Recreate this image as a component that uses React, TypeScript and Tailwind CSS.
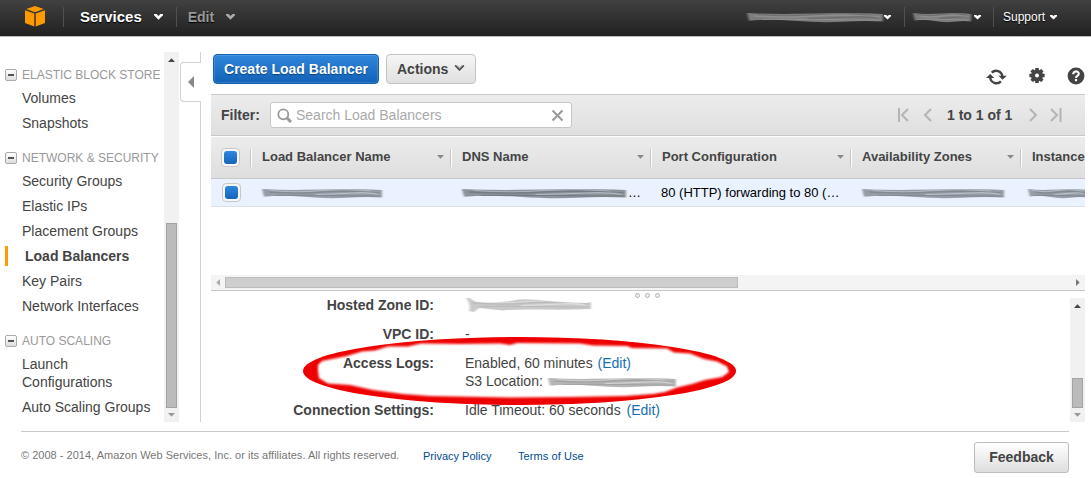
import React from "react";

type Entry = { label: string; active?: boolean };
type Section = { title: string; items: Entry[] };

const sections: Section[] = [
  { title: "ELASTIC BLOCK STORE", items: [{ label: "Volumes" }, { label: "Snapshots" }] },
  {
    title: "NETWORK & SECURITY",
    items: [
      { label: "Security Groups" },
      { label: "Elastic IPs" },
      { label: "Placement Groups" },
      { label: "Load Balancers", active: true },
      { label: "Key Pairs" },
      { label: "Network Interfaces" },
    ],
  },
  { title: "AUTO SCALING", items: [{ label: "Launch Configurations" }, { label: "Auto Scaling Groups" }] },
];

function Chevron({ className, color }: { className?: string; color: string }) {
  return (
    <svg className={className} width="9" height="6" viewBox="0 0 9 6" fill={color}>
      <path d="M0 0h2.6L4.5 1.9 6.4 0H9v1.3L4.5 5.8 0 1.3z" />
    </svg>
  );
}

function Caret() {
  return (
    <svg width="7" height="5" viewBox="0 0 7 5" fill="#fff">
      <path d="M0 0h2.2l1.3.9L4.800 0H7v1.300L3.500 4.600 0 1.300z" />
    </svg>
  );
}

function Tri({ dir, color }: { dir: "up" | "down" | "left" | "right"; color: string }) {
  const d = {
    up: "M0 4L3.500 0.300 7 4z",
    down: "M0 0L3.500 3.700 7 0z",
    left: "M4 0L0.300 3.500 4 7z",
    right: "M0 0L3.700 3.500 0 7z",
  }[dir];
  const flat = dir === "up" || dir === "down";
  return (
    <svg width={flat ? 7 : 4} height={flat ? 4 : 7} fill={color}>
      <path d={d} />
    </svg>
  );
}

function Smudge({
  id,
  w,
  h = 12,
  color,
  streak,
  tail,
}: {
  id: string;
  w: number;
  h?: number;
  color: string;
  streak: string;
  tail?: boolean;
}) {
  return (
    <svg className="block shrink-0 overflow-visible" width={w} height={h} viewBox={`0 0 ${w} ${h}`}>
      <defs>
        <filter id={id} x="-5%" y="-50%" width="110%" height="200%">
          <feGaussianBlur stdDeviation="0.9 0.6" />
        </filter>
      </defs>
      <g filter={`url(#${id})`} fill="none">
        <path
          d={
            tail
              ? `M1 0L5 0Q8 5 ${w * 0.2} 4.5T${w * 0.4} 2T${w * 0.7} 3.500T${w} 4V11Q${w * 0.8} 12 ${w * 0.6} 11.500T${w * 0.3} 12.500L14 10 9 14 4 13Q6 6 1 0z`
              : `M1 2Q${w * 0.2} 3.200 ${w * 0.35} 2.800T${w * 0.65} 2T${w - 1} 3V10.500Q${w * 0.85} 9.500 ${w * 0.7} 10.800T${w * 0.35} 9.800T3 9.800z`
          }
          fill={color}
          fillOpacity="0.68"
        />
        <path d={`M8 5Q${w * 0.3} 7 ${w * 0.5} 5T${w - 4} 6`} stroke={color} strokeWidth="1.600" strokeOpacity="0.5" />
        <path d={`M${w * 0.12} 8.500Q${w * 0.4} 8 ${w * 0.6} 8.500T${w - 3} 9`} stroke={color} strokeWidth="1.200" strokeOpacity="0.6" />
        <path d={`M${w * 0.45} 7.500Q${w * 0.6} 7 ${w * 0.75} 6T${w - 5} 7.500`} stroke={streak} strokeWidth="1.200" strokeOpacity="0.45" />
        <path d={`M${w * 0.08} 3.500Q${w * 0.3} 6 ${w * 0.5} 3.500T${w * 0.9} 4`} stroke={streak} strokeWidth="1" strokeOpacity="0.35" />
      </g>
    </svg>
  );
}

function CheckBox() {
  return (
    <span className="flex size-[19px] shrink-0 items-center justify-center rounded-[4px] border border-[#c8c8c8] bg-[#f6f6f6]">
      <span className="size-[13px] rounded-[3px] bg-linear-to-b from-[#2f86dc] to-[#1565b8]" />
    </span>
  );
}

function Sidebar() {
  return (
    <nav className="flex h-[370px] w-[179px] shrink-0">
      <div className="w-[164px] pt-[14px]">
        {sections.map((s) => (
          <div key={s.title} className="mb-[17px]">
            <div className="mb-[5px] flex h-[18px] items-center pl-[5px]">
              <span className="flex size-3 items-center justify-center rounded-[2px] border border-[#aaa] bg-linear-to-b from-white to-[#ddd]">
                <span className="h-[2px] w-[6px] bg-[#555]" />
              </span>
              <span className="pl-[5px] text-[12px] whitespace-nowrap text-[#999]">{s.title}</span>
            </div>
            <ul className="flex flex-col gap-[7px]">
              {s.items.map((it) =>
                it.active ? (
                  <li key={it.label} className="flex h-[18px] items-center pl-[5px] font-bold">
                    <span className="h-5 w-[3px] shrink-0 bg-[#ff9900]" />
                    <span className="pl-[17px]">{it.label}</span>
                  </li>
                ) : (
                  <li key={it.label} className="pr-[8px] pl-[22px]">
                    {it.label}
                  </li>
                ),
              )}
            </ul>
          </div>
        ))}
      </div>
      <div className="flex w-[15px] flex-col items-center bg-[#f1f1f1]">
        <div className="flex h-[15px] items-center">
          <Tri dir="up" color="#444" />
        </div>
        <div className="mt-[156px] h-[185px] w-[11px] border border-[#a3a3a3] bg-[#bbb]" />
        <div className="flex h-[14px] items-center">
          <Tri dir="down" color="#999" />
        </div>
      </div>
    </nav>
  );
}

function Collapse() {
  return (
    <div className="flex w-[32px] shrink-0 flex-col pl-px">
      <div className="h-[10px] w-[21px] border-r border-[#d2d2d2]" />
      <div className="flex h-[40px] w-[21px] items-center rounded-l-[4px] border border-r-0 border-[#d2d2d2] pl-[7px]">
        <svg width="6" height="12" fill="#888">
          <path d="M6 0v12L0 6z" />
        </svg>
      </div>
      <div className="w-[21px] flex-1 border-r border-[#d2d2d2]" />
    </div>
  );
}

function Toolbar() {
  return (
    <div className="flex h-[42px] w-[874px] pt-[2px] pl-[2px]">
      <button className="h-[30px] w-[166px] rounded-[4px] border border-[#1161b4] bg-linear-to-b from-[#2f86dc] to-[#1262b6] font-bold text-white shadow-[inset_0_0_0_1px_rgba(255,255,255,0.14)] [text-shadow:0_1px_1px_#0a4482]">
        Create Load Balancer
      </button>
      <button className="ml-[7px] flex h-[30px] w-[90px] items-center rounded-[4px] border border-[#c3c3c3] bg-linear-to-b from-[#f6f6f6] to-[#e0e0e0] pl-[10px] font-bold">
        Actions
        <svg className="mb-[2px] ml-[6px]" width="11" height="8" viewBox="0 0 11 8">
          <path d="M1 1.200h2.300L5.500 3.400 7.700 1.200H10L5.500 6.500z" fill="#999" />
          <path d="M1 1.500L5.500 6.200 10 1.500" fill="none" stroke="#444" strokeWidth="1.200" />
        </svg>
      </button>
      <div className="mt-[13px] ml-auto flex items-start text-[#444]">
        <svg className="mt-[2px]" width="21" height="17" viewBox="0 0 21 17" fill="none" stroke="#444" strokeWidth="2.400">
          <path d="M5.700 3.600A6.300 6.300 0 0 1 16.400 7.500M14.900 12.400A6.300 6.300 0 0 1 4.200 8.500" />
          <path d="M12.400 6.800h8.400L16.600 10.800zM0 9h8.400L4.200 5z" fill="#444" stroke="none" />
        </svg>
        <svg className="ml-[22px]" width="16" height="17" viewBox="-8 -8.500 16 17">
          <g fill="#444">
            <circle r="6" />
            {[0, 45, 90, 135].map((a) => (
              <rect key={a} x="-1.800" y="-7.600" width="3.600" height="15.200" rx="0.500" transform={`rotate(${a})`} />
            ))}
          </g>
          <circle r="2" fill="#fff" />
        </svg>
        <svg className="ml-[22px]" width="18" height="18" viewBox="0 0 18 18">
          <circle cx="9" cy="9" r="8.400" fill="#444" />
          <path d="M6.200 7.300C6.200 3.500 11.800 3.600 11.800 6.800c0 2.200-2.800 2-2.800 4.100" fill="none" stroke="#fff" strokeWidth="2.100" />
          <rect x="7.900" y="12" width="2.200" height="2.200" fill="#fff" />
        </svg>
      </div>
    </div>
  );
}

function FilterBar() {
  return (
    <div className="flex h-[42px] items-center border-y border-[#c8c8c8] bg-linear-to-b from-[#ececec] to-[#dfdfdf] pl-[10px]">
      <span className="w-[49px] font-bold">Filter:</span>
      <div className="flex h-[26px] w-[302px] items-center rounded-[3px] border border-[#c6c6c6] bg-white pl-[6px]">
        <svg width="15" height="15" viewBox="0 0 15 15" fill="none" stroke="#999">
          <circle cx="6.300" cy="6.300" r="5" strokeWidth="1.800" />
          <path d="M9.800 9.800L14 14" strokeWidth="3" />
        </svg>
        <span className="pl-[4px] text-[#a9a9a9]">Search Load Balancers</span>
        <svg className="mr-[7px] ml-auto" width="13" height="13" viewBox="0 0 13 13" stroke="#999" strokeWidth="2">
          <path d="M1.500 1.500l10 10M11.500 1.500l-10 10" />
        </svg>
      </div>
      <div className="ml-auto flex items-center pr-[23px]">
        <svg width="11" height="14" fill="none" stroke="#b4b4b4" strokeWidth="2">
          <path d="M1 0v14M10 1L4 7l6 6" />
        </svg>
        <svg className="ml-[14px]" width="9" height="14" fill="none" stroke="#b4b4b4" strokeWidth="2">
          <path d="M8 1L2 7l6 6" />
        </svg>
        <span className="mx-[15px] w-[67px] font-bold whitespace-nowrap">1 to 1 of 1</span>
        <svg width="9" height="14" fill="none" stroke="#b4b4b4" strokeWidth="2">
          <path d="M1 1l6 6-6 6" />
        </svg>
        <svg className="ml-[12px]" width="12" height="14" fill="none" stroke="#b4b4b4" strokeWidth="2">
          <path d="M1 1l6 6-6 6M10.500 0v14" />
        </svg>
      </div>
    </div>
  );
}

function HeadCell({ label, width }: { label: string; width: string }) {
  return (
    <div className={`flex shrink-0 items-center ${width}`}>
      <span className="h-[18px] w-px bg-[#c4c4c4]" />
      <span className="h-[18px] w-px bg-white" />
      <span className="pb-[2px] pl-[10px] whitespace-nowrap">{label}</span>
      <span className="mr-[6px] mb-px ml-auto">
        <Tri dir="down" color="#888" />
      </span>
    </div>
  );
}

function Table() {
  return (
    <div className="h-[139px] w-[874px] overflow-hidden text-[13px]">
      <div className="flex h-[43px] items-center border-t border-b border-t-white border-b-[#c8c8c8] bg-linear-to-b from-[#ececec] to-[#dedede] pl-[10px] font-bold">
        <CheckBox />
        <div className="ml-[10px] flex">
          <HeadCell label="Load Balancer Name" width="w-[200px]" />
          <HeadCell label="DNS Name" width="w-[200px]" />
          <HeadCell label="Port Configuration" width="w-[200px]" />
          <HeadCell label="Availability Zones" width="w-[170px]" />
          <HeadCell label="Instance" width="w-[170px]" />
        </div>
      </div>
      <div className="flex h-[28px] items-center border-b border-[#dcdfe5] bg-[#e9f2fe] pl-[11px] text-black">
        <CheckBox />
        <div className="w-[201px] shrink-0 pl-[20px]">
          <Smudge id="s-name" w={122} color="#6f767d" streak="#e9f2fe" />
        </div>
        <div className="flex w-[219px] shrink-0 items-center pl-[19px]">
          <Smudge id="s-dns" w={166} color="#5f666d" streak="#e9f2fe" />
          <span className="pl-px">…</span>
        </div>
        <div className="w-[200px] shrink-0 whitespace-nowrap">80 (HTTP) forwarding to 80 (…</div>
        <div className="flex w-[166px] shrink-0">
          <Smudge id="s-zone" w={144} color="#6f767d" streak="#e9f2fe" />
        </div>
        <Smudge id="s-inst" w={62} color="#6f767d" streak="#e9f2fe" />
      </div>
    </div>
  );
}

function Details() {
  return (
    <div className="relative flex h-[131px] w-[874px] overflow-hidden">
      <div className="grid flex-1 grid-cols-[223px_1fr] content-start gap-x-[31px] pt-[5px] leading-[18px]">
        <b className="h-[29px] text-right">Hosted Zone ID:</b>
        <div className="pt-[2px]">
          <Smudge id="s-zid" w={126} h={14} color="#b0b0b0" streak="#ffffff" tail />
        </div>
        <b className="h-[29px] text-right">VPC ID:</b>
        <span>-</span>
        <b className="h-[47px] text-right">Access Logs:</b>
        <div>
          <div>
            Enabled, 60 minutes <span className="ml-px text-[#146eb4]">(Edit)</span>
          </div>
          <div className="flex items-center">
            S3 Location:
            <span className="mt-[2px] ml-[4px]">
              <Smudge id="s-s3" w={130} color="#929292" streak="#ffffff" />
            </span>
          </div>
        </div>
        <b className="text-right">Connection Settings:</b>
        <div>
          Idle Timeout: 60 seconds <span className="ml-[2px] text-[#146eb4]">(Edit)</span>
        </div>
      </div>
      <div className="mt-[7px] flex w-[15px] flex-col items-center bg-[#f1f1f1]">
        <div className="flex h-[15px] items-center">
          <Tri dir="up" color="#444" />
        </div>
        <div className="mt-[65px] h-[30px] w-[11px] border border-[#a3a3a3] bg-[#bbb]" />
        <div className="flex h-[14px] items-center">
          <Tri dir="down" color="#999" />
        </div>
      </div>
      <div className="absolute top-[2px] left-[424px] flex gap-[5px]">
        {[0, 1, 2].map((i) => (
          <span key={i} className="size-[5px] rounded-full border border-[#b5b5b5] bg-[#eee]" />
        ))}
      </div>
      <svg className="pointer-events-none absolute top-[44px] left-[90px]" width="440" height="72" viewBox="301 335 440 72">
        <defs>
          <clipPath id="ring">
            <ellipse cx="519.500" cy="371" rx="216.500" ry="34" />
          </clipPath>
          <filter id="soft" x="-5%" y="-20%" width="110%" height="140%">
            <feGaussianBlur stdDeviation="1" />
          </filter>
        </defs>
        <g clipPath="url(#ring)">
          <path
            filter="url(#soft)"
            fill="#ee0202"
            fillRule="evenodd"
            d="M290 325H750V417H290z M318 371V365L322 361 347 356 362 351.500 375 350.500 388 346.500 408 346.500 421 343.500 460 344 500 343.500 510 345 517 343 580 343.500 593 345.500 627 346 632 348 667 348.500 674 352.500 690 353.500 704 359 717 361.500 727 366.500 729 372 722 377 705 380 692 384 677 387.500 665 392 653 394 625 396 570 397 510 397.500 430 396 403 394 373 390 350 385 328 383.500 319 378z"
          />
        </g>
      </svg>
    </div>
  );
}

export default function App() {
  return (
    <div className="h-[478px] w-[1091px] overflow-hidden bg-white font-['Liberation_Sans',Arial,sans-serif] text-[14px] leading-[18px] text-[#444]">
      <header className="flex h-[37px] items-center border-b border-[#bbb] bg-linear-to-b from-[#414141] to-[#212121] pb-[2px] text-white [text-shadow:0_1px_1px_#000]">
        <svg className="mb-px ml-[25px]" width="20" height="21" viewBox="0 0 20 21" fill="#f90">
          <path d="M10 0l8.800 3L10 6.200 1.200 3z M0 4.200l9.300 3.300V20.500L0 17z M20 4.200l-9.300 3.300V20.500L20 17z" />
        </svg>
        <span className="ml-[18px] h-5 w-px border-r border-[#505050] bg-[#161616]" />
        <span className="ml-4 text-[15px] font-bold">Services</span>
        <Chevron className="ml-[12px]" color="#fff" />
        <span className="ml-[13px] h-5 w-px border-r border-[#505050] bg-[#161616]" />
        <span className="ml-[11px] text-[14px] font-bold text-[#999]">Edit</span>
        <Chevron className="ml-[12px]" color="#aaa" />
        <div className="ml-auto flex items-center text-[12px]">
          <Smudge id="s-user" w={138} color="#a0a0a0" streak="#555555" />
          <Caret />
          <span className="ml-[13px] h-5 w-px border-r border-[#505050] bg-[#161616]" />
          <span className="ml-[7px]">
            <Smudge id="s-region" w={60} color="#a0a0a0" streak="#555555" />
          </span>
          <span className="ml-[2px]">
            <Caret />
          </span>
          <span className="ml-[12px] h-5 w-px border-r border-[#505050] bg-[#161616]" />
          <span className="mr-[5px] ml-[9px]">Support</span>
          <Caret />
          <span className="w-[34px]" />
        </div>
      </header>
      <div className="mt-[15px] flex h-[370px]">
        <Sidebar />
        <Collapse />
        <main className="w-[880px] shrink-0">
          <Toolbar />
          <div className="w-[874px]">
            <FilterBar />
          </div>
          <Table />
          <div className="flex h-4 w-[874px] items-center border-b border-[#c8c8c8] bg-[#f4f4f4] pr-[5px] pl-[5px]">
            <Tri dir="left" color="#aaa" />
            <div className="ml-[5px] h-[11px] w-[513px] border border-[#bbb] bg-[#cecece]" />
            <span className="ml-auto">
              <Tri dir="right" color="#777" />
            </span>
          </div>
          <Details />
        </main>
      </div>
      <footer className="mt-[9px] ml-[21px] flex w-[1048px] border-t border-[#c8c8c8] text-[11px] text-[#777]">
        <span className="mt-[14px] w-[378px] tracking-[0.017px] whitespace-nowrap">
          © 2008 - 2014, Amazon Web Services, Inc. or its affiliates. All rights reserved.
        </span>
        <span className="mt-[15px] ml-[24px] w-[69px] whitespace-nowrap text-[#004b91]">Privacy Policy</span>
        <span className="mt-[15px] ml-[26px] tracking-[0.08px] whitespace-nowrap text-[#004b91]">Terms of Use</span>
        <button className="mt-[10px] ml-auto h-[31px] w-[95px] rounded-[3px] border border-[#bcbcbc] bg-linear-to-b from-white to-[#dedede] pb-[2px] text-[14px] font-bold text-[#444]">
          Feedback
        </button>
      </footer>
    </div>
  );
}
